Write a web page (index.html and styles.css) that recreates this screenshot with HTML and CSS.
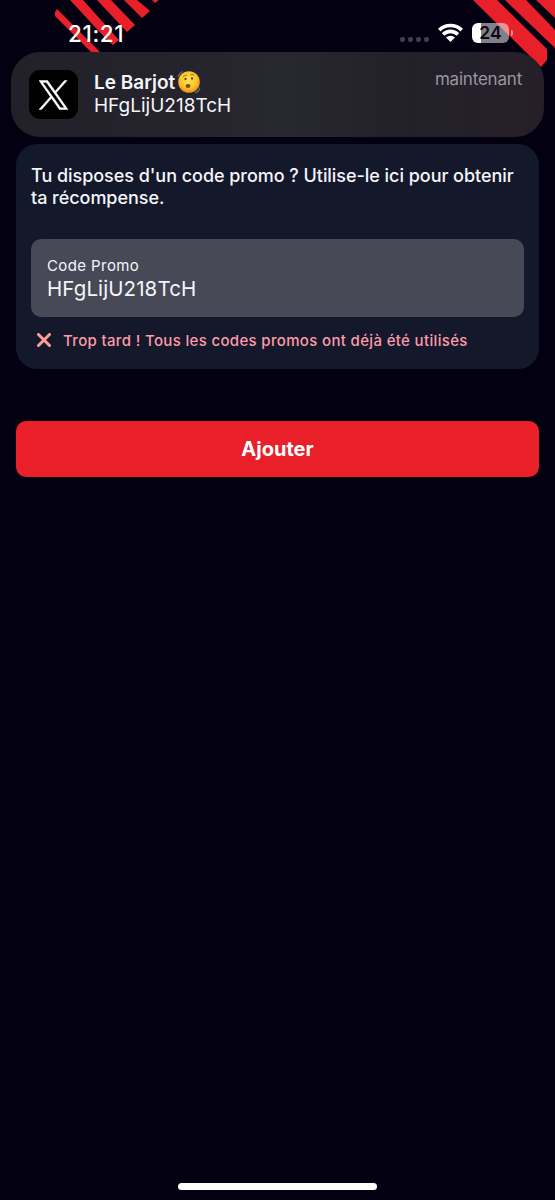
FILE: index.html
```html
<!DOCTYPE html>
<html lang="fr">
<head>
  <meta charset="UTF-8">
  <meta name="viewport" content="width=device-width, initial-scale=1.0">
  <title>Code Promo</title>
  <link rel="stylesheet" href="styles.css">
</head>
<body>
  <svg class="stripes" width="555" height="70" viewBox="0 0 555 70">
    <path d="M55 12l2-3 43 43 2 4h-8l-3-4-36-36zM70 0h13l36 40-6 5-5-4zM97 0h14l24 25-8 7zM124 0h13l13 11-8 7zM152 0h7l-4 3z"/>
    <path d="M473 0h24l50 49v11l-6 7zM505 0h21l29 30v18zM536 0h19v18z"/>
  </svg>

  <header class="status-bar">
    <span class="time">21:21</span>
    <div class="status-icons">
      <div class="signal"><i></i><i></i><i></i><i></i></div>
      <svg class="wifi" width="25" height="19" viewBox="0 0 25 19">
        <g fill="none" stroke="#fff" stroke-width="3.6">
          <path d="M1.3 7.1a16 16 0 0 1 22.4 0"/>
          <path d="M5.1 11.5a10.4 10.4 0 0 1 14.8 0"/>
        </g>
        <path fill="#fff" d="M8 14.6a6.4 6.4 0 0 1 9 0L12.500 18.900z"/>
      </svg>
      <div class="battery">24</div>
      <div class="battery-tip"></div>
    </div>
  </header>

  <div class="notification">
    <div class="app-icon">
      <svg width="29" height="30" viewBox="0 0 24 24" fill="#fff" stroke="#fff" stroke-width=".4">
        <path d="M14.28 10.16 23.22 0H21.1l-7.76 8.82L7.14 0H0l9.37 13.35L0 24h2.12l8.2-9.3L16.86 24H24zM11.38 13.46l-.95-1.33L2.88 1.56h3.25l6.1 8.54.95 1.33 7.93 11.1h-3.25z"/>
      </svg>
    </div>
    <div class="notification-text">
      <div class="sender">
        <span>Le Barjot</span>
        <svg class="emoji" width="24" height="24" viewBox="0 0 24 24">
          <defs>
            <radialGradient id="face" cx=".48" cy=".4" r=".6">
              <stop offset="0" stop-color="#ffe350"/>
              <stop offset=".65" stop-color="#fbc32b"/>
              <stop offset="1" stop-color="#e98d16"/>
            </radialGradient>
          </defs>
          <g fill="none" stroke="#6b6c78" stroke-width="1.2">
            <path d="M1 7Q2 3 6 1.5M18 23q4-1.5 5-5.5"/>
          </g>
          <circle cx="12" cy="12" r="10.8" fill="url(#face)"/>
          <g fill="none" stroke="#a8711c" stroke-width="1" stroke-linecap="round">
            <path d="M6.3 6.6Q7.500 5 9.500 5.300M13.500 4.800q2-1 3.500.2"/>
          </g>
          <ellipse cx="8.500" cy="9" rx="1" ry="1.300" fill="#5b3b16"/>
          <ellipse cx="15" cy="8.500" rx="1" ry="1.300" fill="#5b3b16"/>
          <ellipse cx="11" cy="16" rx="2.400" ry="2.100" fill="#7d4c12"/>
        </svg>
      </div>
      <div class="message">HFgLijU218TcH</div>
    </div>
    <div class="when">maintenant</div>
  </div>

  <main>
    <section class="card">
      <p class="intro">Tu disposes d'un code promo ? Utilise-le ici pour obtenir<br>ta récompense.</p>
      <div class="field">
        <div class="label">Code Promo</div>
        <div class="value">HFgLijU218TcH</div>
      </div>
      <div class="error">
        <svg width="14" height="14" viewBox="0 0 14 14">
          <path d="M1.5 1.5l11 11M12.5 1.5l-11 11" stroke="#ff9a9d" stroke-width="3" stroke-linecap="round"/>
        </svg>
        <span>Trop tard ! Tous les codes promos ont déjà été utilisés</span>
      </div>
    </section>
    <button class="btn" type="button">Ajouter</button>
  </main>

  <footer class="home-indicator"></footer>
</body>
</html>
```

FILE: styles.css
```css
* {
  box-sizing: border-box;
}
body {
  display: flex;
  flex-direction: column;
  height: 1200px;
  margin: 0;
  background: #030111;
  color: #f5f5fa;
  font-family: Inter, "Liberation Sans", sans-serif;
  overflow: hidden;
}
svg {
  display: block;
  flex: none;
}
.stripes {
  position: absolute;
  top: 0;
  left: 0;
  fill: #e8202a;
  z-index: -1;
}
.status-bar {
  display: flex;
  justify-content: space-between;
  height: 52px;
  padding: 20px 42px 0 68px;
}
.time {
  color: #fff;
  font-size: 22.5px;
  font-weight: 500;
  line-height: 27px;
  letter-spacing: 0.6px;
}
.status-icons {
  display: flex;
  align-items: center;
  height: 25px;
}
.signal {
  display: flex;
  gap: 3px;
  margin: 13px 9px 0 0;
}
.signal i {
  width: 5px;
  height: 5px;
  border-radius: 2px;
  background: #3e3d49;
}
.battery {
  width: 37px;
  height: 20px;
  margin-left: 9px;
  border-radius: 6px;
  background: linear-gradient(90deg, #fff 9px, rgba(255, 255, 255, 0.5) 9px);
  color: #0b0915;
  font-size: 17.5px;
  font-weight: 600;
  line-height: 20px;
  text-align: center;
}
.battery-tip {
  width: 2px;
  height: 6px;
  margin-left: 2px;
  border-radius: 0 3px 3px 0;
  background: rgba(255, 255, 255, 0.5);
}
.notification {
  display: flex;
  height: 85px;
  margin: 0 11px;
  padding: 18px 22px 0 18px;
  border-radius: 29px;
  background: linear-gradient(90deg, #222028 0%, #25242d 35%, #282830 50%, #22212a 75%, #261f28 100%);
}
.app-icon {
  display: flex;
  align-items: center;
  justify-content: center;
  width: 49px;
  height: 49px;
  border-radius: 11px;
  background: #000;
}
.notification-text {
  flex: 1;
  padding-left: 16px;
}
.sender {
  display: flex;
  align-items: center;
  gap: 2px;
  height: 24px;
  font-size: 19px;
  font-weight: 600;
}
.message {
  font-size: 19px;
  line-height: 23px;
}
.when {
  color: #9997a1;
  font-size: 17px;
  line-height: 19px;
  letter-spacing: -0.2px;
}
.card {
  height: 225px;
  margin: 7px 16px 0;
  padding: 21px 15px 0;
  border-radius: 21px;
  background: #14182b;
}
.intro {
  margin: 0 0 30px;
  font-size: 18px;
  font-weight: 500;
  line-height: 22px;
  letter-spacing: -0.04px;
  white-space: nowrap;
}
.field {
  height: 78px;
  padding: 16px 16px 0;
  border-radius: 10px;
  background: #474956;
}
.label {
  font-size: 15px;
  line-height: 21px;
  letter-spacing: 0.4px;
}
.value {
  font-size: 20.5px;
  line-height: 26px;
  letter-spacing: 0.1px;
}
.error {
  display: flex;
  align-items: center;
  gap: 12px;
  height: 20px;
  margin-top: 13px;
  padding-left: 6px;
  color: #ff9aaa;
  font-size: 15px;
  font-weight: 500;
  letter-spacing: 0.34px;
  white-space: nowrap;
}
.btn {
  display: block;
  width: 523px;
  height: 56px;
  margin: 52px 16px 0;
  padding: 0;
  border: none;
  border-radius: 10px;
  background: #e9202a;
  color: #fff;
  font-family: inherit;
  font-size: 20px;
  font-weight: 700;
}
.home-indicator {
  width: 199px;
  height: 7px;
  margin: auto auto 10px;
  border-radius: 4px;
  background: #fff;
}
```
